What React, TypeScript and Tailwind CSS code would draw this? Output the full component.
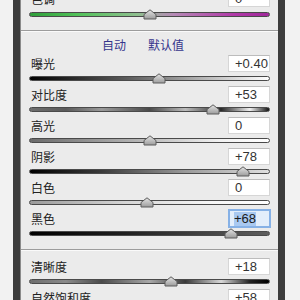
import React from "react";

interface SliderRow {
  label: string;
  value: string;
  pos: number; // -1..1
  track: string;
  focused?: boolean;
}

const rows: SliderRow[] = [
  {
    label: "曝光",
    value: "+0.40",
    pos: 0.08,
    track: "bg-[linear-gradient(to_right,#000000,#5a5a5a_40%,#bdbdbd_75%,#ffffff)]",
  },
  {
    label: "对比度",
    value: "+53",
    pos: 0.53,
    track:
      "bg-[linear-gradient(to_right,#6e6e6e,#5a5a5a_15%,#9a9a9a_30%,#4a4a4a_50%,#bcbcbc_65%,#2a2a2a_80%,#f0f0f0_92%,#111111)]",
  },
  {
    label: "高光",
    value: "0",
    pos: 0,
    track: "bg-[linear-gradient(to_right,#6a6a6a,#b5b5b5_45%,#f2f2f2_80%,#ffffff)]",
  },
  {
    label: "阴影",
    value: "+78",
    pos: 0.78,
    track: "bg-[linear-gradient(to_right,#000000,#3a3a3a_30%,#9a9a9a_65%,#e0e0e0)]",
  },
  {
    label: "白色",
    value: "0",
    pos: -0.02,
    track: "bg-[linear-gradient(to_right,#9a9a9a,#d6d6d6_40%,#f6f6f6_75%,#ffffff)]",
  },
  {
    label: "黑色",
    value: "+68",
    pos: 0.68,
    track: "bg-[linear-gradient(to_right,#000000,#202020_40%,#4a4a4a_80%,#5e5e5e)]",
    focused: true,
  },
];

const bottomRows: SliderRow[] = [
  {
    label: "清晰度",
    value: "+18",
    pos: 0.18,
    track:
      "bg-[linear-gradient(to_right,#6e6e6e,#8a8a8a_15%,#4a4a4a_30%,#a8a8a8_50%,#3a3a3a_65%,#d8d8d8_80%,#222222_92%,#000000)]",
  },
  {
    label: "自然饱和度",
    value: "+58",
    pos: 0.58,
    track: "bg-[linear-gradient(to_right,#8a8a8a,#b070a0_60%,#c040c0)]",
  },
];

function Thumb({ pos }: { pos: number }) {
  const left = `calc(${((pos + 1) / 2) * 100}% - 7px)`;
  return (
    <svg
      width="14"
      height="11"
      viewBox="0 0 14 11"
      className="absolute top-[-3px]"
      style={{ left }}
    >
      <defs>
        <linearGradient id="thumbFill" x1="0" y1="0" x2="0" y2="1">
          <stop offset="0" stopColor="#e4e4e4" />
          <stop offset="1" stopColor="#9c9c9c" />
        </linearGradient>
      </defs>
      <polygon
        points="7,0.8 13,5.5 13,10 1,10 1,5.5"
        fill="url(#thumbFill)"
        stroke="#5c5c5c"
        strokeWidth="1"
      />
    </svg>
  );
}

function Row({ row }: { row: SliderRow }) {
  return (
    <div className="flex flex-col">
      <div className="flex h-[17px] shrink-0 items-center justify-between">
        <div className="pl-[2px] text-[12px] leading-none text-[#222]">{row.label}</div>
        {row.focused ? (
          <div className="flex h-[19px] w-[43px] mr-[-1px] items-center border-2 border-[#86b1e6] bg-[#e3eefb] pl-[4px]">
            <span className="bg-[#a9c9f1] text-[13px] leading-[14px] text-[#1a1a1a] font-['Liberation_Sans',Arial,sans-serif]">
              {row.value}
            </span>
          </div>
        ) : (
          <div className="flex h-[17px] w-[42px] items-center border border-[#d6d6d6] border-t-[#bcbcbc] bg-white pl-[6px] text-[13px] leading-none text-[#333] font-['Liberation_Sans',Arial,sans-serif]">
            {row.value}
          </div>
        )}
      </div>
      <div className="relative mt-[4px] mb-[5px] h-[5px] shrink-0">
        <div
          className={`h-[5px] w-full rounded-full border border-[#4a4a4a] ${row.track}`}
        />
        <Thumb pos={row.pos} />
      </div>
    </div>
  );
}

function Separator() {
  return (
    <div className="mx-[-8px]">
      <div className="h-px bg-[#9c9c9c]" />
      <div className="h-px bg-[#fafafa]" />
    </div>
  );
}

export default function App() {
  return (
    <div className="flex h-[300px] w-[300px] overflow-hidden bg-[#f2f2f2] font-['Noto_Sans_CJK_SC','Noto_Sans',sans-serif]">
      <div className="w-[13px] shrink-0" />
      <div className="w-[7px] shrink-0 bg-[#3d3d3d]" />
      <div className="w-px shrink-0 bg-[#8a8a8a]" />
      <div className="w-[257px] shrink-0 bg-[#ebebeb] px-[8px]">
        <div className="mt-[-10px]">
          <div className="flex h-[17px] items-center justify-between">
            <div className="pl-[2px] text-[12px] leading-none text-[#222]">色调</div>
            <div className="flex h-[17px] w-[42px] items-center border border-[#d6d6d6] bg-white pl-[6px] text-[13px] leading-none text-[#333] font-['Liberation_Sans',Arial,sans-serif]">
              0
            </div>
          </div>
          <div className="relative mt-[5px] h-[5px]">
            <div className="h-[5px] w-full rounded-full border border-[#4a4a4a] bg-[linear-gradient(to_right,#2f9e3a,#52c25a_20%,#8fbf8f_45%,#b58ab5_60%,#b13aa8_85%,#a0289a)]" />
            <Thumb pos={0} />
          </div>
        </div>
        <div className="mt-[13px]">
          <Separator />
        </div>
        <div className="flex h-[23px] items-center justify-center gap-[22px] pt-[3px] text-[12px] leading-none text-[#35358c]">
          <span className="ml-[-13px]">自动</span>
          <span>默认值</span>
        </div>
        {rows.map((r) => (
          <Row key={r.label} row={r} />
        ))}
        <div className="mt-[8px] mb-[7px]">
          <Separator />
        </div>
        {bottomRows.map((r) => (
          <Row key={r.label} row={r} />
        ))}
      </div>
      <div className="w-[7px] shrink-0 bg-[#3d3d3d]" />
      <div className="flex-1" />
    </div>
  );
}
